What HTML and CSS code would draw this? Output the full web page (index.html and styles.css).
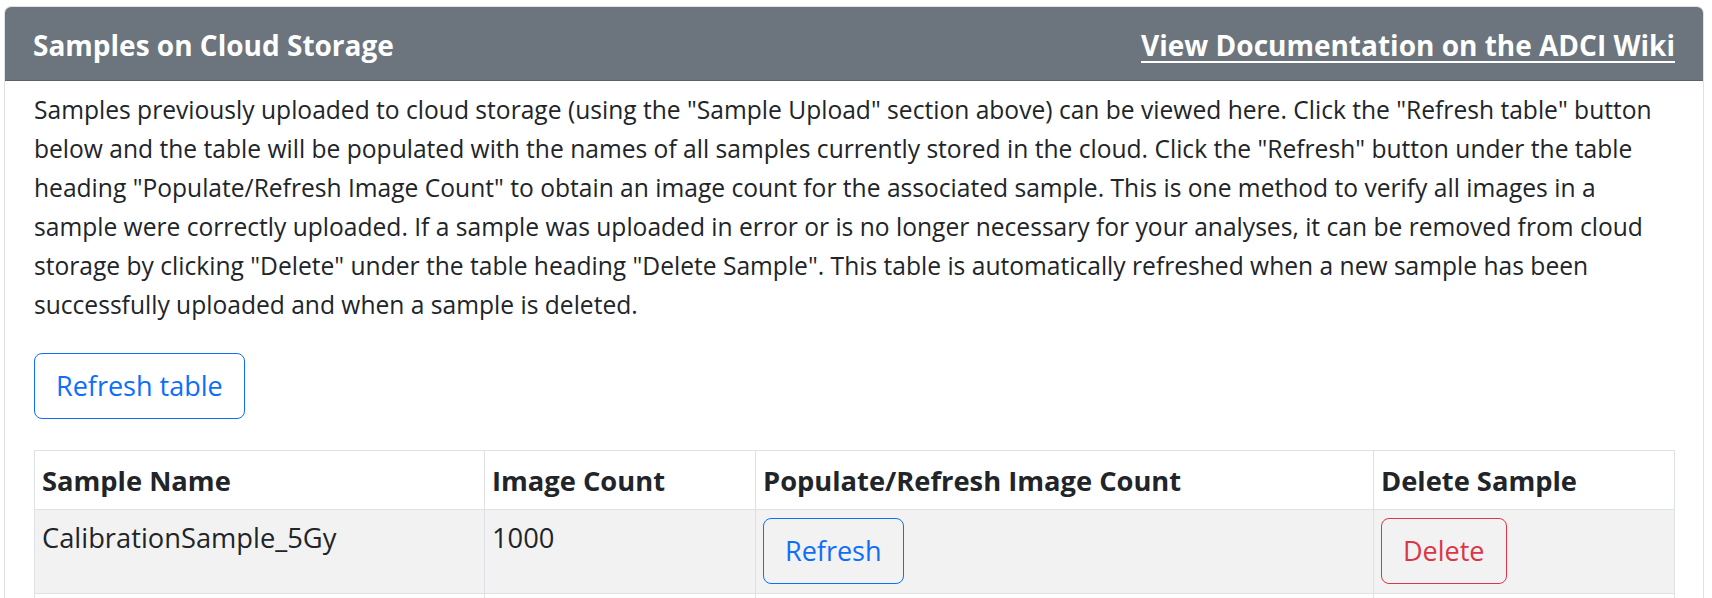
FILE: index.html
```html
<!DOCTYPE html>
<html lang="en">
<head>
<meta charset="utf-8">
<title>Samples on Cloud Storage</title>
<link rel="stylesheet" href="styles.css">
</head>
<body>
<div class="page">
  <section class="card">
    <header class="card-header">
      <h5 class="card-title">Samples on Cloud Storage</h5>
      <a class="doc-link" href="#">View Documentation on the ADCI Wiki</a>
    </header>
    <div class="card-body">
      <p class="intro">Samples previously uploaded to cloud storage (using the "Sample Upload" section above) can be viewed here. Click the "Refresh table" button below and the table will be populated with the names of all samples currently stored in the cloud. Click the "Refresh" button under the table heading "Populate/Refresh Image Count" to obtain an image count for the associated sample. This is one method to verify all images in a sample were correctly uploaded. If a sample was uploaded in error or is no longer necessary for your analyses, it can be removed from cloud storage by clicking "Delete" under the table heading "Delete Sample". This table is automatically refreshed when a new sample has been successfully uploaded and when a sample is deleted.</p>
      <button class="btn btn-primary-outline btn-large">Refresh table</button>
      <table class="samples">
        <thead>
          <tr>
            <th class="col-name">Sample Name</th>
            <th class="col-count">Image Count</th>
            <th class="col-refresh">Populate/Refresh Image Count</th>
            <th class="col-delete">Delete Sample</th>
          </tr>
        </thead>
        <tbody>
          <tr class="striped">
            <td>CalibrationSample_5Gy</td>
            <td>1000</td>
            <td><button class="btn btn-primary-outline">Refresh</button></td>
            <td><button class="btn btn-danger-outline">Delete</button></td>
          </tr>
          <tr>
            <td>CalibrationSample_4Gy</td>
            <td>1000</td>
            <td><button class="btn btn-primary-outline">Refresh</button></td>
            <td><button class="btn btn-danger-outline">Delete</button></td>
          </tr>
        </tbody>
      </table>
    </div>
  </section>
</div>
</body>
</html>
```

FILE: styles.css
```css
* { box-sizing: border-box; }

html, body {
  margin: 0;
  background: #ffffff;
}

body {
  font-family: "Open Sans", "Noto Sans", "Liberation Sans", sans-serif;
  color: #212529;
  font-size: 24.6px;
  line-height: 39px;
}

.page {
  padding: 6px 8px 0 4px;
}

.card {
  border: 1px solid #dfe1e4;
  border-radius: 7px;
  overflow: hidden;
}

.card-header {
  display: flex;
  align-items: center;
  justify-content: space-between;
  height: 74px;
  padding: 3px 28px 0 28px;
  background: #6c757d;
  color: #ffffff;
  border-bottom: 1px solid #5a6168;
}

.card-title {
  margin: 0;
  font-size: 28px;
  font-weight: 700;
  line-height: 40px;
}

.doc-link {
  color: #ffffff;
  font-size: 28px;
  font-weight: 700;
  line-height: 40px;
  text-decoration: underline;
  text-underline-offset: 5px;
  text-decoration-thickness: 2px;
}

.card-body {
  padding: 9px 29px 0 29px;
}

.intro {
  margin: 0 0 29px 0;
}

.btn {
  font-family: inherit;
  font-size: 27px;
  line-height: 40px;
  padding: 12px 21px;
  background: transparent;
  border: 1px solid;
  border-radius: 8px;
  cursor: pointer;
}

.btn-primary-outline {
  color: #0d6efd;
  border-color: #0d6efd;
}

.btn-danger-outline {
  color: #dc3545;
  border-color: #dc3545;
}

.btn-large {
  display: block;
  margin-bottom: 31px;
}

.samples {
  width: 100%;
  border-collapse: collapse;
  table-layout: fixed;
  font-size: 27.3px;
  line-height: 39px;
}

.samples th,
.samples td {
  border: 1px solid #dee2e6;
  text-align: left;
  vertical-align: top;
}

.samples th {
  font-weight: 700;
  padding: 10px 7px 9px 7px;
}

.samples td {
  padding: 8px 7px 9px 7px;
}

.striped td {
  background: #f2f2f2;
}

.col-name { width: 450px; }
.col-count { width: 271px; }
.col-refresh { width: 618px; }
.col-delete { width: 301px; }
```
